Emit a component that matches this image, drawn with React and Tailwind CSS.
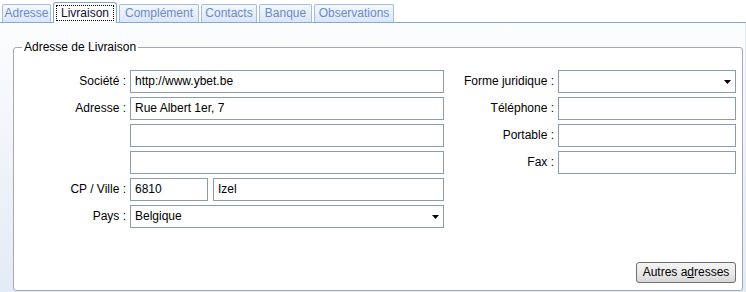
const tabs = [
  { label: "Adresse", w: "w-[49px]" },
  { label: "Livraison", w: "w-[64px]" },
  { label: "Complément", w: "w-[80px]" },
  { label: "Contacts", w: "w-[56px]" },
  { label: "Banque", w: "w-[53px]" },
  { label: "Observations", w: "w-[80px]" },
];

const font = { fontFamily: '"Liberation Sans", Arial, sans-serif' };

function Arrow() {
  return (
    <svg width="7" height="4" viewBox="0 0 7 4" className="absolute right-[4px] top-[9px]">
      <path d="M0 0H7L3.5 4Z" fill="#000" />
    </svg>
  );
}

function Field({ value = "", w = "w-full", select = false }) {
  return (
    <div
      className={`relative h-[23px] ${w} border border-[#8b9bb3] bg-white pl-[4px] text-[12px] leading-[21px] text-black`}
    >
      {value}
      {select && <Arrow />}
    </div>
  );
}

function Label({ children }) {
  return (
    <div className="h-[23px] text-right text-[12px] leading-[23px] text-black whitespace-nowrap">
      {children}
    </div>
  );
}

export default function App() {
  return (
    <div className="w-[746px] h-[292px] overflow-hidden bg-white flex flex-col" style={font}>
      <div className="h-[23px] flex items-end gap-[2px] pl-[2px] border-b border-[#84a9d9]">
        {tabs.map((t) =>
          t.label === "Livraison" ? (
            <div
              key={t.label}
              className={`relative z-10 -mb-px h-[21px] ${t.w} px-[2px] pt-[2px] bg-white border border-b-0 border-[#7fa4d6] rounded-t-[3px]`}
            >
              <div className="h-[16px] border border-dotted border-black text-center text-[12px] leading-[14px] text-[#10103a]">
                {t.label}
              </div>
            </div>
          ) : (
            <div
              key={t.label}
              className={`h-[18px] ${t.w} border border-b-0 border-[#a4bde0] rounded-t-[2px] bg-gradient-to-b from-[#f4f8fd] to-[#dae6f6] text-center text-[12px] leading-[17px] text-[#6a8bcb] whitespace-nowrap`}
            >
              {t.label}
            </div>
          )
        )}
      </div>
      <div className="flex-1 flex flex-col pl-[13px] pr-[6px] pt-[17px] pb-[1px] bg-gradient-to-b from-[#fcfdfe] to-[#e3ebf6] border-r border-[#e2e8f0]">
        <fieldset className="flex-1 flex flex-col bg-white border border-[#a7a6b8] rounded-[3px] pt-[16px] pb-[7px] pr-[6px]">
          <legend className="ml-[8px] px-[2px] text-[12px] leading-[14px] text-black">
            Adresse de Livraison
          </legend>
          <div className="flex">
            <div className="grid grid-cols-[112px_314px] gap-x-[4px] gap-y-[4px]">
              <Label>Société :</Label>
              <Field value="http://www.ybet.be" />
              <Label>Adresse :</Label>
              <Field value="Rue Albert 1er, 7" />
              <div />
              <Field />
              <div />
              <Field />
              <Label>CP / Ville :</Label>
              <div className="flex gap-[5px]">
                <Field value="6810" w="w-[78px]" />
                <Field value="Izel" w="flex-1" />
              </div>
              <Label>Pays :</Label>
              <Field value="Belgique" select />
            </div>
            <div className="ml-[10px] grid grid-cols-[100px_178px] gap-x-[4px] gap-y-[4px] content-start">
              <Label>Forme juridique :</Label>
              <Field select />
              <Label>Téléphone :</Label>
              <Field />
              <Label>Portable :</Label>
              <Field />
              <Label>Fax :</Label>
              <Field />
            </div>
          </div>
          <div className="mt-auto flex justify-end">
            <button className="w-[100px] h-[21px] border border-[#707070] rounded-[3px] bg-gradient-to-b from-[#f3f3f3] via-[#ebebeb] to-[#d6d6d6] text-[12px] leading-[19px] text-black">
              Autres a<span className="underline">d</span>resses
            </button>
          </div>
        </fieldset>
      </div>
    </div>
  );
}
